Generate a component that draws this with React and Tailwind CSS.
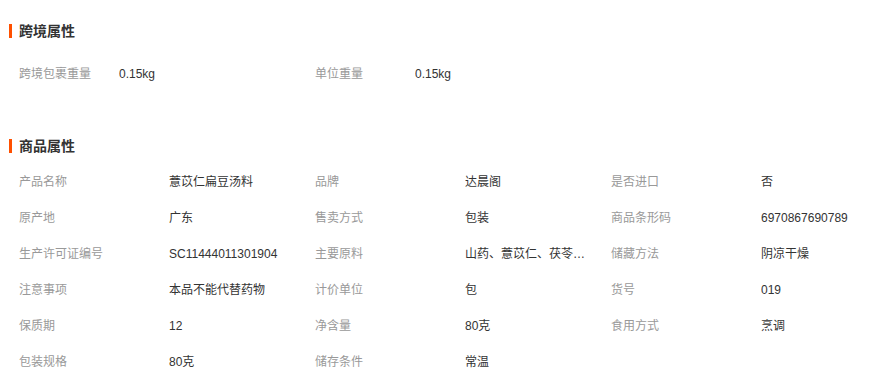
const crossBorder = [
  { label: '跨境包裹重量', value: '0.15kg' },
  { label: '单位重量', value: '0.15kg' },
]

const goods = [
  { label: '产品名称', value: '薏苡仁扁豆汤料' },
  { label: '品牌', value: '达晨阁' },
  { label: '是否进口', value: '否' },
  { label: '原产地', value: '广东' },
  { label: '售卖方式', value: '包装' },
  { label: '商品条形码', value: '6970867690789' },
  { label: '生产许可证编号', value: 'SC11444011301904' },
  { label: '主要原料', value: '山药、薏苡仁、茯苓、扁豆、芡实' },
  { label: '储藏方法', value: '阴凉干燥' },
  { label: '注意事项', value: '本品不能代替药物' },
  { label: '计价单位', value: '包' },
  { label: '货号', value: '019' },
  { label: '保质期', value: '12' },
  { label: '净含量', value: '80克' },
  { label: '食用方式', value: '烹调' },
  { label: '包装规格', value: '80克' },
  { label: '储存条件', value: '常温' },
]

function Heading({ children }) {
  return (
    <div className="flex items-center h-[18px] pl-[9px]">
      <span className="w-[3px] h-[14px] bg-[#ff5000] mr-[7px]" />
      <span className="text-[14px] leading-[18px] font-bold text-[#333]">{children}</span>
    </div>
  )
}

function AttrGrid({ items, wide }) {
  return (
    <div className="grid grid-cols-[296px_296px_296px] pl-[19px]">
      {items.map((item) => (
        <div key={item.label} className="flex items-center h-[36px] text-[12px]">
          <span className={`${wide ? 'w-[150px]' : 'w-[100px]'} shrink-0 text-[#999]`}>{item.label}</span>
          <span className="w-[128px] truncate text-[#333]">{item.value}</span>
        </div>
      ))}
    </div>
  )
}

export default function App() {
  return (
    <div
      className="w-[879px] h-[384px] bg-white overflow-hidden pt-[22px]"
      style={{ fontFamily: '"Liberation Sans", "Noto Sans CJK SC", sans-serif' }}
    >
      {/* 跨境属性 */}
      <Heading>跨境属性</Heading>
      <div className="mt-[16px]">
        <AttrGrid items={crossBorder} />
      </div>

      {/* 商品属性 */}
      <div className="mt-[45px]">
        <Heading>商品属性</Heading>
      </div>
      <div className="mt-[9px]">
        <AttrGrid items={goods} wide />
      </div>
    </div>
  )
}
